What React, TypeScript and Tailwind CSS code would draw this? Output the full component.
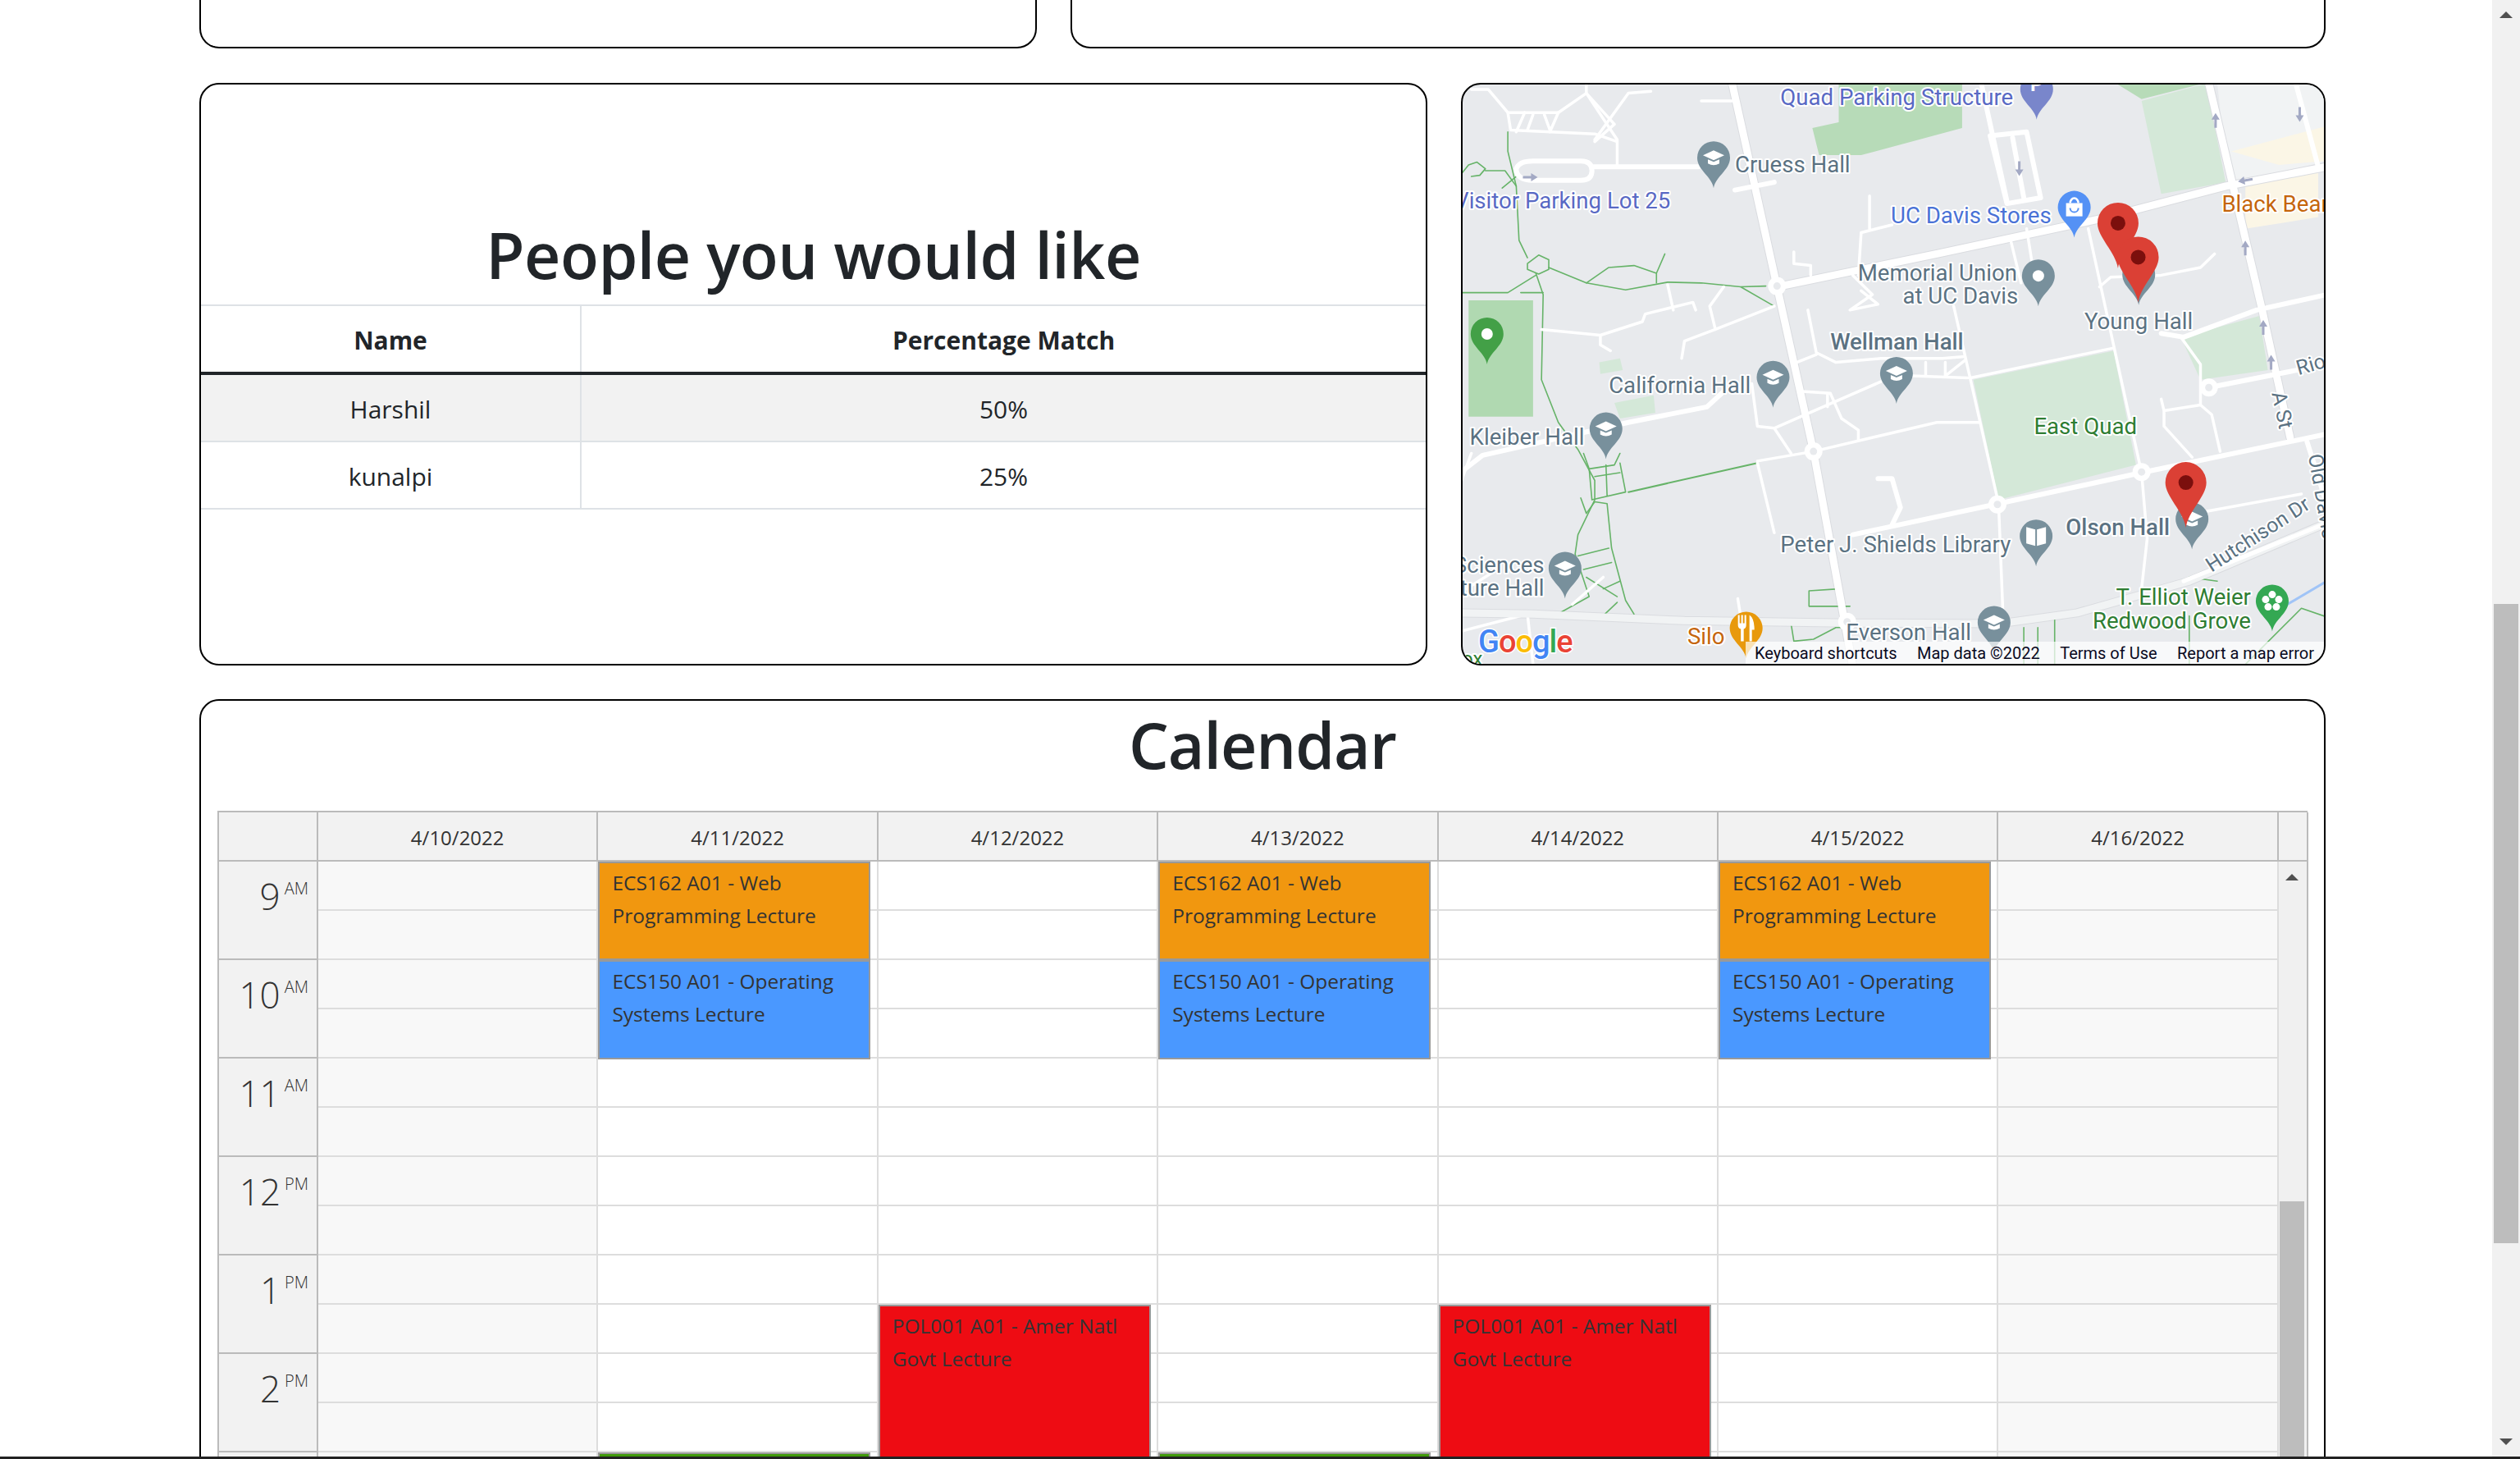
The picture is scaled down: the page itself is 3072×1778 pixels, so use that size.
import React from "react";

const F = "[font-family:'Open_Sans','Noto_Sans',sans-serif]";

const Z = ({ children }: { children: React.ReactNode }) => (
  <g transform="translate(-3,-13) scale(0.6837,0.4719)">{children}</g>
);
const X = (z: number) => z / 1.4627 - 3;
const Y = (z: number) => z / 2.119 - 13;

const stroke = (d: string, color: string, w: number, key?: React.Key) => (
  <path key={key} d={d} fill="none" stroke={color} strokeWidth={w} strokeLinejoin="round" strokeLinecap="round" vectorEffect="non-scaling-stroke" />
);

const mainRoads = [
  "M485,25 L565,550 L630,975 L700,1530",
  "M565,550 L850,465 L1140,375 L1365,290 L1545,240",
  "M1335,25 L1430,610 L1480,940",
  "M0,1392 L130,1395 L400,1412 L690,1418 L960,1420 L1100,1392 L1300,1310 L1545,1160",
];
const midRoads = [
  "M0,1030 L40,985 L300,900 L440,860 L470,820",
  "M700,1190 L960,1110 L1215,1030 L1545,930",
  "M1335,810 L1545,750",
  "M1250,670 L1290,680 L1420,610 L1545,570",
  "M100,245 Q105,225 130,225 H215 Q235,225 235,250 Q235,275 215,275 H130 Q100,275 100,245Z",
  "M235,240 H425",
  "M490,300 L560,280",
  "M945,160 L1010,150 L1035,320 L975,335 Z",
  "M985,165 L1005,320",
  "M930,30 L975,330",
  "M745,1045 L770,1045 L785,1120 L770,1165",
  "M1510,950 L1545,1110",
  "M1490,25 L1530,240",
];
const thinRoads = [
  "M880,600 L910,790 L960,1110 L968,1400",
  "M1120,400 L1165,700 L1215,1030 L1225,1200 L1215,1330",
  "M910,785 L1165,708",
  "M530,1000 L630,975 L850,900 L925,900",
  "M20,40 H50 L85,100 H175 L225,50 L280,170 V235",
  "M85,100 L90,145 L240,155 L280,175",
  "M115,100 L100,150 M130,105 L120,145 M150,105 L160,145 M175,100 L160,150",
  "M225,50 V25 M225,50 L275,130 L240,175 M300,50 L340,45 M300,50 L240,170",
  "M430,70 H485 M730,315 V400 M715,410 L770,390 M715,410 L710,520",
  "M700,520 L735,570 L695,610 L745,595 L715,560",
  "M595,460 V490 L625,495 V520",
  "M620,610 L635,720 L670,745 L750,735 L860,735 L900,730 M600,745 L635,725",
  "M145,660 L250,675 V700 L268,715 M250,675 L325,640 L330,620 L415,590 L420,610",
  "M470,550 L445,600 L455,660 M395,735 L400,690 L455,660 L560,600 M370,545 L380,610",
  "M805,780 L905,785 M830,745 V780 M865,745 V780 L900,740",
  "M520,800 L530,910 L560,915 L750,795 M560,915 L590,980",
  "M610,820 L660,825 L680,890 L710,920 V945 M655,825 V860",
  "M530,1005 L560,1185 M1140,550 L1160,525 L1250,520 L1320,500 L1345,465",
  "M980,420 L1000,540 M1010,400 L1020,490",
  "M1250,840 L1255,870 L1320,855 L1340,880 L1355,975 M1255,870 V910 L1305,990",
  "M1285,680 L1320,750 V855 M1330,1130 L1500,1085",
  "M20,980 L0,1060 M0,1340 L55,1290 M0,1440 L120,1395 L130,1525 M255,1300 L200,1370",
  "M495,1355 L500,1400",
];
const greens = [
  "M85,150 V200 L100,290 L105,430 L120,475",
  "M120,490 L140,468 L158,480 L158,505 L140,517 L120,505Z",
  "M158,500 L225,540 L295,558 L370,538 L430,540 L500,550 L545,548 M500,550 L560,600",
  "M225,540 L265,500 L310,495 L350,515 L365,465 M350,515 V540",
  "M135,515 L148,570 L145,790 L175,900 L210,970 L240,1050 V1100 L210,1190 L205,1240 L230,1350 L180,1390",
  "M0,565 H85 L135,520 M108,565 H148",
  "M0,262 L15,235 L30,228 L45,245 L35,262 L20,265 M45,250 H80 L100,290 M75,295 L100,265",
  "M220,980 L230,1020 L275,1010 L285,980 M230,1020 L235,1100 L295,1080 L285,1005 M240,1040 L285,1030 M260,1010 L262,1090",
  "M215,1095 L225,1135 L240,1105 L262,1110 L270,1225 L295,1360 L310,1395",
  "M210,1245 L265,1225 M220,1280 L270,1262 M225,1300 L280,1350 M255,1330 L285,1310 M258,1395 L280,1365",
  "M622,1335 L675,1330 M622,1335 V1375 H695 M590,1420 L595,1465 L630,1460 L670,1430 L690,1430",
  "M1005,1430 V1525 M1030,1430 V1525 M1060,1410 V1525 M1300,1400 V1525 M1400,1525 L1500,1380 L1540,1400 M1300,1300 L1350,1310",
];

const arrows: [number, number, number][] = [
  [125, 267, 90], [997, 245, 180], [1347, 120, 0], [1497, 105, 180], [1400, 275, 260], [1400, 450, 0], [1432, 655, 0], [1446, 745, 0],
];

const Cap = () => (
  <g fill="#fff">
    <path d="M-13,-3 L0,-9 L13,-3 L0,3Z" />
    <path d="M-7,2 V7 Q0,11 7,7 V2 L0,5Z" />
  </g>
);

type PinProps = { x: number; y: number; color: string; children?: React.ReactNode };
const Pin = ({ x, y, color, children }: PinProps) => (
  <g transform={`translate(${X(x)},${Y(y)})`}>
    <path d="M0,0 C-2,-14 -20,-22 -20,-37 A20,20 0 1 1 20,-37 C20,-22 2,-14 0,0Z" fill={color} />
    <g transform="translate(0,-37)">{children}</g>
  </g>
);
const Marker = ({ x, y }: { x: number; y: number }) => (
  <g transform={`translate(${X(x)},${Y(y)})`}>
    <path d="M0,0 C-3,-20 -25,-38 -25,-55 A25,25 0 1 1 25,-55 C25,-38 3,-20 0,0Z" fill="#db4035" />
    <circle cx="0" cy="-55" r="9" fill="#7b0f0d" />
  </g>
);

type L = { t: string; x: number; y: number; c?: string; a?: "start" | "end"; w?: number; r?: number };
const gray = "#5b7282";
const labels: L[] = [
  { t: "Quad Parking Structure", x: 571, y: 80, c: "#5969c4" },
  { t: "Cruess Hall", x: 490, y: 255 },
  { t: "Visitor Parking Lot 25", x: 375, y: 348, c: "#5969c4", a: "end" },
  { t: "UC Davis Stores", x: 768, y: 385, c: "#4a72d6" },
  { t: "Memorial Union", x: 993, y: 533, a: "end" },
  { t: "at UC Davis", x: 995, y: 593, a: "end" },
  { t: "Black Bear", x: 1358, y: 355, c: "#c5650c" },
  { t: "Young Hall", x: 1113, y: 660 },
  { t: "Wellman Hall", x: 660, y: 712, w: 500 },
  { t: "California Hall", x: 265, y: 825 },
  { t: "Kleiber Hall", x: 17, y: 957 },
  { t: "East Quad", x: 1023, y: 930, c: "#2e7d32" },
  { t: "Olson Hall", x: 1080, y: 1190, w: 500 },
  { t: "Peter J. Shields Library", x: 571, y: 1235 },
  { t: "Sciences", x: 150, y: 1288, a: "end" },
  { t: "ture Hall", x: 150, y: 1347, a: "end" },
  { t: "Silo", x: 405, y: 1472, c: "#c5650c" },
  { t: "Everson Hall", x: 688, y: 1463 },
  { t: "T. Elliot Weier", x: 1410, y: 1372, c: "#2e7d32", a: "end" },
  { t: "Redwood Grove", x: 1410, y: 1432, c: "#2e7d32", a: "end" },
  { t: "A St", x: 1447, y: 825, r: 78 },
  { t: "Old Davis", x: 1512, y: 985, r: 80 },
  { t: "Hutchison Dr", x: 1340, y: 1288, r: -33 },
  { t: "Rio", x: 1495, y: 778, r: -16 },
  { t: "ox", x: 3, y: 1528, c: "#2e7d32" },
];

const MapCard = () => (
  <div className="relative flex-1 min-w-0 h-full overflow-hidden rounded-[24px] border-2 border-black bg-[#e8eaed]">
    <svg width="1050" height="706" viewBox="0 0 1050 706" className="block">
      <Z>
        <path d="M1350,25 H1490 L1545,25 V225 L1370,290Z" fill="#f1f3f4" />
        <path d="M1400,290 L1530,250 L1530,370 L1400,400Z" fill="#fbf6e6" />
        <path d="M1375,200 L1545,135 V225 L1460,235Z" fill="#fbf6e6" />
        <path d="M15,585 H130 V885 H15Z" fill="#b0d9b1" />
        <path d="M675,25 H895 V140 L715,210 H640 L628,140 L675,125Z" fill="#b7dbb8" />
        <path d="M1170,25 H1325 L1215,65Z" fill="#b7dbb8" />
        <path d="M915,790 L1165,715 L1205,1010 L960,1100Z" fill="#d4e8d8" />
        <path d="M1215,70 L1330,25 L1365,280 L1250,310Z" fill="#d4e8d8" />
        <path d="M1285,680 L1425,625 L1440,765 L1320,790Z" fill="#d4e8d8" />
        <path d="M248,745 L285,735 L290,765 L250,775Z" fill="#d4e8d8" />
        <path d="M275,850 L345,830 L348,875 L285,890Z" fill="#d4e8d8" />
        {mainRoads.map((d, i) => stroke(d, "#dadce0", 11, `c${i}`))}
        {greens.map((d, i) => stroke(d, "#66b368", 1.6, `g${i}`))}
        {stroke("M300,1080 L530,1005", "#66b368", 2, "g-long")}
        {thinRoads.map((d, i) => stroke(d, "#ffffff", 3.5, `t${i}`))}
        {midRoads.map((d, i) => stroke(d, "#ffffff", 6, `m${i}`))}
        {mainRoads.map((d, i) => stroke(d, i === 3 ? "#f1f3f4" : "#ffffff", 9, `r${i}`))}
        {stroke("M1290,1310 L1545,1160", "#ffffff", 5, "hutch")}
        {stroke("M1440,1400 L1545,1310", "#a0c4f7", 3, "creek")}
      </Z>
      {[[565, 548], [630, 975], [1215, 1028], [958, 1112], [1335, 810], [690, 1415]].map(([a, b]) => (
        <g key={a}>
          <circle cx={X(a)} cy={Y(b)} r="11" fill="#fff" />
          <circle cx={X(a)} cy={Y(b)} r="4.5" fill="#e8eaed" />
        </g>
      ))}
      {arrows.map(([a, b, r]) => (
        <path key={a} transform={`translate(${X(a)},${Y(b)}) rotate(${r})`} d="M0,-9 L5,-1 H1.5 V9 H-1.5 V-1 H-5Z" fill="#a3a9c4" />
      ))}
      <g style={{ fontFamily: "Roboto, sans-serif" }} stroke="#ffffff" strokeWidth="4" paintOrder="stroke" strokeLinejoin="round">
        {labels.map((l) => (
          <text
            key={l.t}
            x={l.r ? 0 : X(l.x)}
            y={l.r ? 0 : Y(l.y)}
            transform={l.r ? `translate(${X(l.x)},${Y(l.y)}) rotate(${l.r})` : undefined}
            fill={l.c ?? gray}
            textAnchor={l.a ?? "start"}
            fontWeight={l.w ?? 400}
            style={{ fontSize: l.r ? 25 : l.t === "ox" ? 24 : 27.6 }}
          >
            {l.t}
          </text>
        ))}
      </g>
      <Pin x={452} y={295} color="#78909c"><Cap /></Pin>
      <Pin x={558} y={862} color="#78909c"><Cap /></Pin>
      <Pin x={778} y={852} color="#78909c"><Cap /></Pin>
      <Pin x={260} y={995} color="#78909c"><Cap /></Pin>
      <Pin x={187} y={1355} color="#78909c"><Cap /></Pin>
      <Pin x={952} y={1495} color="#78909c"><Cap /></Pin>
      <Pin x={1305} y={1228} color="#78909c"><Cap /></Pin>
      <Pin x={1210} y={597} color="#78909c"><Cap /></Pin>
      <Pin x={1031} y={600} color="#78909c"><circle r="7" fill="#fff" /></Pin>
      <Pin x={1027} y={1272} color="#78909c">
        <path d="M-12,-11 L-1,-8 V12 L-12,9Z M12,-11 L1,-8 V12 L12,9Z" fill="#fff" />
      </Pin>
      <Pin x={1028} y={118} color="#7986cb">
        <text textAnchor="middle" y="2" fill="#fff" fontWeight="700" style={{ fontFamily: "Roboto, sans-serif", fontSize: 24 }}>P</text>
      </Pin>
      <Pin x={1095} y={423} color="#5491f5">
        <path d="M-10,-5 H10 V11 H-10Z" fill="#fff" />
        <path d="M-5,-5 A5,6 0 0 1 5,-5" fill="none" stroke="#fff" strokeWidth="2.5" />
        <path d="M-5,1 A5,5 0 0 0 5,1" fill="none" stroke="#5491f5" strokeWidth="2" />
      </Pin>
      <Pin x={510} y={1510} color="#e8990c">
        <path d="M-10,-16 V-4 Q-10,0 -6.5,1 V16 H-3 V1 Q0,0 0,-4 V-16 H-2 V-6 H-4 V-16 H-6 V-6 H-8 V-16Z M4,-16 Q10,-12 10,2 H7 V16 H4Z" fill="#fff" />
      </Pin>
      <Pin x={1448} y={1440} color="#34a853">
        <g fill="#fff">
          <circle cx="0" cy="-8" r="4.5" /><circle cx="8" cy="-2" r="4.5" /><circle cx="5" cy="7" r="4.5" /><circle cx="-5" cy="7" r="4.5" /><circle cx="-8" cy="-2" r="4.5" />
        </g>
      </Pin>
      <Pin x={48} y={750} color="#43a047"><circle r="7" fill="#fff" /></Pin>
      <Marker x={1173} y={502} />
      <Marker x={1209} y={590} />
      <Marker x={1294} y={1172} />
      <text x="19" y="692" stroke="#ffffff" strokeWidth="3" paintOrder="stroke" fontWeight="500" style={{ fontFamily: "Roboto, sans-serif", fontSize: 38, letterSpacing: -1 }}>
        <tspan fill="#4285f4">G</tspan><tspan fill="#ea4335">o</tspan><tspan fill="#fbbc05">o</tspan><tspan fill="#4285f4">g</tspan><tspan fill="#34a853">l</tspan><tspan fill="#ea4335">e</tspan>
      </text>
    </svg>
    <div className="absolute right-0 bottom-0 flex h-[27px] w-[705px] items-center justify-between bg-white/70 pl-[11px] pr-[12px] text-[20px] leading-none text-[#0a0a1e] [font-family:Roboto,sans-serif]">
      <span>Keyboard shortcuts</span>
      <span>Map data ©2022</span>
      <span>Terms of Use</span>
      <span>Report a map error</span>
    </div>
  </div>
);

const MatchTable = () => (
  <div className="h-full w-[1497px] shrink-0 overflow-hidden rounded-[24px] border-2 border-black bg-white pt-[159px]">
    <h1 className="mb-[13px] h-[96px] text-center text-[77px] leading-[98px] font-semibold tracking-[-0.5px] text-[#212529]">People you would like</h1>
    <table className="w-full table-fixed border-collapse text-center text-[30px] text-[#212529]">
      <colgroup>
        <col className="w-[463px]" />
        <col />
      </colgroup>
      <thead>
        <tr className="h-[83px] border-t-2 border-b-4 border-t-[#dee2e6] border-b-[#212529]">
          <th className="border-r-2 border-r-[#dee2e6] pt-[2px] font-bold">Name</th>
          <th className="pt-[2px] font-bold">Percentage Match</th>
        </tr>
      </thead>
      <tbody>
        <tr className="h-[83px] border-b-2 border-b-[#dee2e6] bg-[#f2f2f2]">
          <td className="border-r-2 border-r-[#dee2e6] pt-[2px]">Harshil</td>
          <td className="pt-[2px]">50%</td>
        </tr>
        <tr className="h-[82px] border-b-2 border-b-[#dee2e6]">
          <td className="border-r-2 border-r-[#dee2e6] pt-[2px]">kunalpi</td>
          <td className="pt-[2px]">25%</td>
        </tr>
      </tbody>
    </table>
  </div>
);

const hours: [string, string][] = [["9", "AM"], ["10", "AM"], ["11", "AM"], ["12", "PM"], ["1", "PM"], ["2", "PM"], ["3", "PM"]];
const dates = ["4/10/2022", "4/11/2022", "4/12/2022", "4/13/2022", "4/14/2022", "4/15/2022", "4/16/2022"];

type Ev = { top: string; h: string; bg: string; text: string };
const orange: Ev = { top: "top-0", h: "h-[120px]", bg: "bg-[#f1970f]", text: "ECS162 A01 - Web Programming Lecture" };
const blue: Ev = { top: "top-[120px]", h: "h-[121px]", bg: "bg-[#4a98ff]", text: "ECS150 A01 - Operating Systems Lecture" };
const red: Ev = { top: "top-[540px]", h: "h-[300px]", bg: "bg-[#ee0c13]", text: "POL001 A01 - Amer Natl Govt Lecture" };
const green: Ev = { top: "top-[720px]", h: "h-[120px]", bg: "bg-[#3f9a09]", text: "" };

const events: Ev[][] = [[], [orange, blue, green], [red], [orange, blue, green], [red], [orange, blue], []];

const Calendar = () => (
  <div className="h-[1000px] shrink-0 overflow-hidden rounded-[24px] border-2 border-black bg-white px-[20px]">
    <h1 className="h-[96px] text-center text-[77px] leading-[108px] font-semibold tracking-[-1px] text-[#212529]">Calendar</h1>
    <div className="mt-[38px] grid grid-cols-[121px_repeat(7,341.4px)_36px] border-t-2 border-l-2 border-[#bbbbbb] text-[24px] text-[#333333]">
      <div className="h-[60px] border-r-2 border-b-2 border-[#bbbbbb] bg-[#f2f2f2]" />
      {dates.map((d) => (
        <div key={d} className="flex h-[60px] items-center justify-center border-r-2 border-b-2 border-[#bbbbbb] bg-[#f2f2f2] pt-[4px]">
          {d}
        </div>
      ))}
      <div className="h-[60px] border-r-2 border-b-2 border-[#bbbbbb] bg-[#f2f2f2]" />
      <div className="flex flex-col border-r-2 border-[#bbbbbb] bg-[#f2f2f2]">
        {hours.map(([h, m]) => (
          <div key={h} className="flex h-[120px] shrink-0 items-start justify-end gap-[5px] border-b-2 border-[#bbbbbb] pr-[10px] pt-[12px] font-light">
            <span className="text-[44px] leading-[60px]">{h}</span>
            <span className="pt-[7px] text-[20px] leading-[28px]">{m}</span>
          </div>
        ))}
      </div>
      {events.map((evs, c) => (
        <div key={c} className={`relative flex flex-col border-r-2 border-[#dddddd] ${c === 0 || c === 6 ? "bg-[#f8f8f8]" : "bg-white"}`}>
          {Array.from({ length: 14 }).map((_, r) => (
            <div key={r} className="h-[60px] shrink-0 border-b-2 border-[#dddddd]" />
          ))}
          {evs.map((e) => (
            <div key={e.top} className={`absolute left-0 w-[332px] ${e.top} ${e.h} ${e.bg} border-2 border-[#999999] px-[15px] pt-[4px] text-[24.5px] leading-[40px] text-[#333333]`}>
              {e.text}
            </div>
          ))}
        </div>
      ))}
      <div className="relative border-r-2 border-[#bbbbbb] bg-[#f0f0f0]">
        <svg width="16" height="8" viewBox="0 0 16 8" className="absolute left-[8px] top-[15px]"><path d="M8,0 L16,8 H0Z" fill="#505050" /></svg>
        <div className="absolute left-[1px] top-[414px] h-[400px] w-[30px] bg-[#bdbdbd]" />
      </div>
    </div>
  </div>
);

export default function App() {
  return (
    <div className={`relative flex h-[1778px] w-[3072px] overflow-hidden bg-white ${F}`}>
      <main className="flex h-full w-[3038px] shrink-0 flex-col pl-[243px] pr-[203px]">
        <div className="flex h-[59px] shrink-0 gap-[41px]">
          <div className="w-[1021px] shrink-0 rounded-b-[24px] border-x-2 border-b-2 border-black" />
          <div className="flex-1 rounded-b-[24px] border-x-2 border-b-2 border-black" />
        </div>
        <div className="mt-[42px] flex h-[710px] shrink-0 gap-[41px]">
          <MatchTable />
          <MapCard />
        </div>
        <div className="mt-[41px]">
          <Calendar />
        </div>
      </main>
      <div className="relative w-[34px] shrink-0 bg-[#f1f1f1]">
        <svg width="16" height="8" viewBox="0 0 16 8" className="absolute left-[9px] top-[14px]"><path d="M8,0 L16,8 H0Z" fill="#505050" /></svg>
        <div className="absolute left-[2px] top-[736px] h-[779px] w-[30px] bg-[#bdbdbd]" />
        <svg width="16" height="8" viewBox="0 0 16 8" className="absolute left-[9px] top-[1753px]"><path d="M8,8 L16,0 H0Z" fill="#505050" /></svg>
      </div>
      <div className="absolute inset-x-0 bottom-0 h-[3px] bg-[#222222]" />
    </div>
  );
}
